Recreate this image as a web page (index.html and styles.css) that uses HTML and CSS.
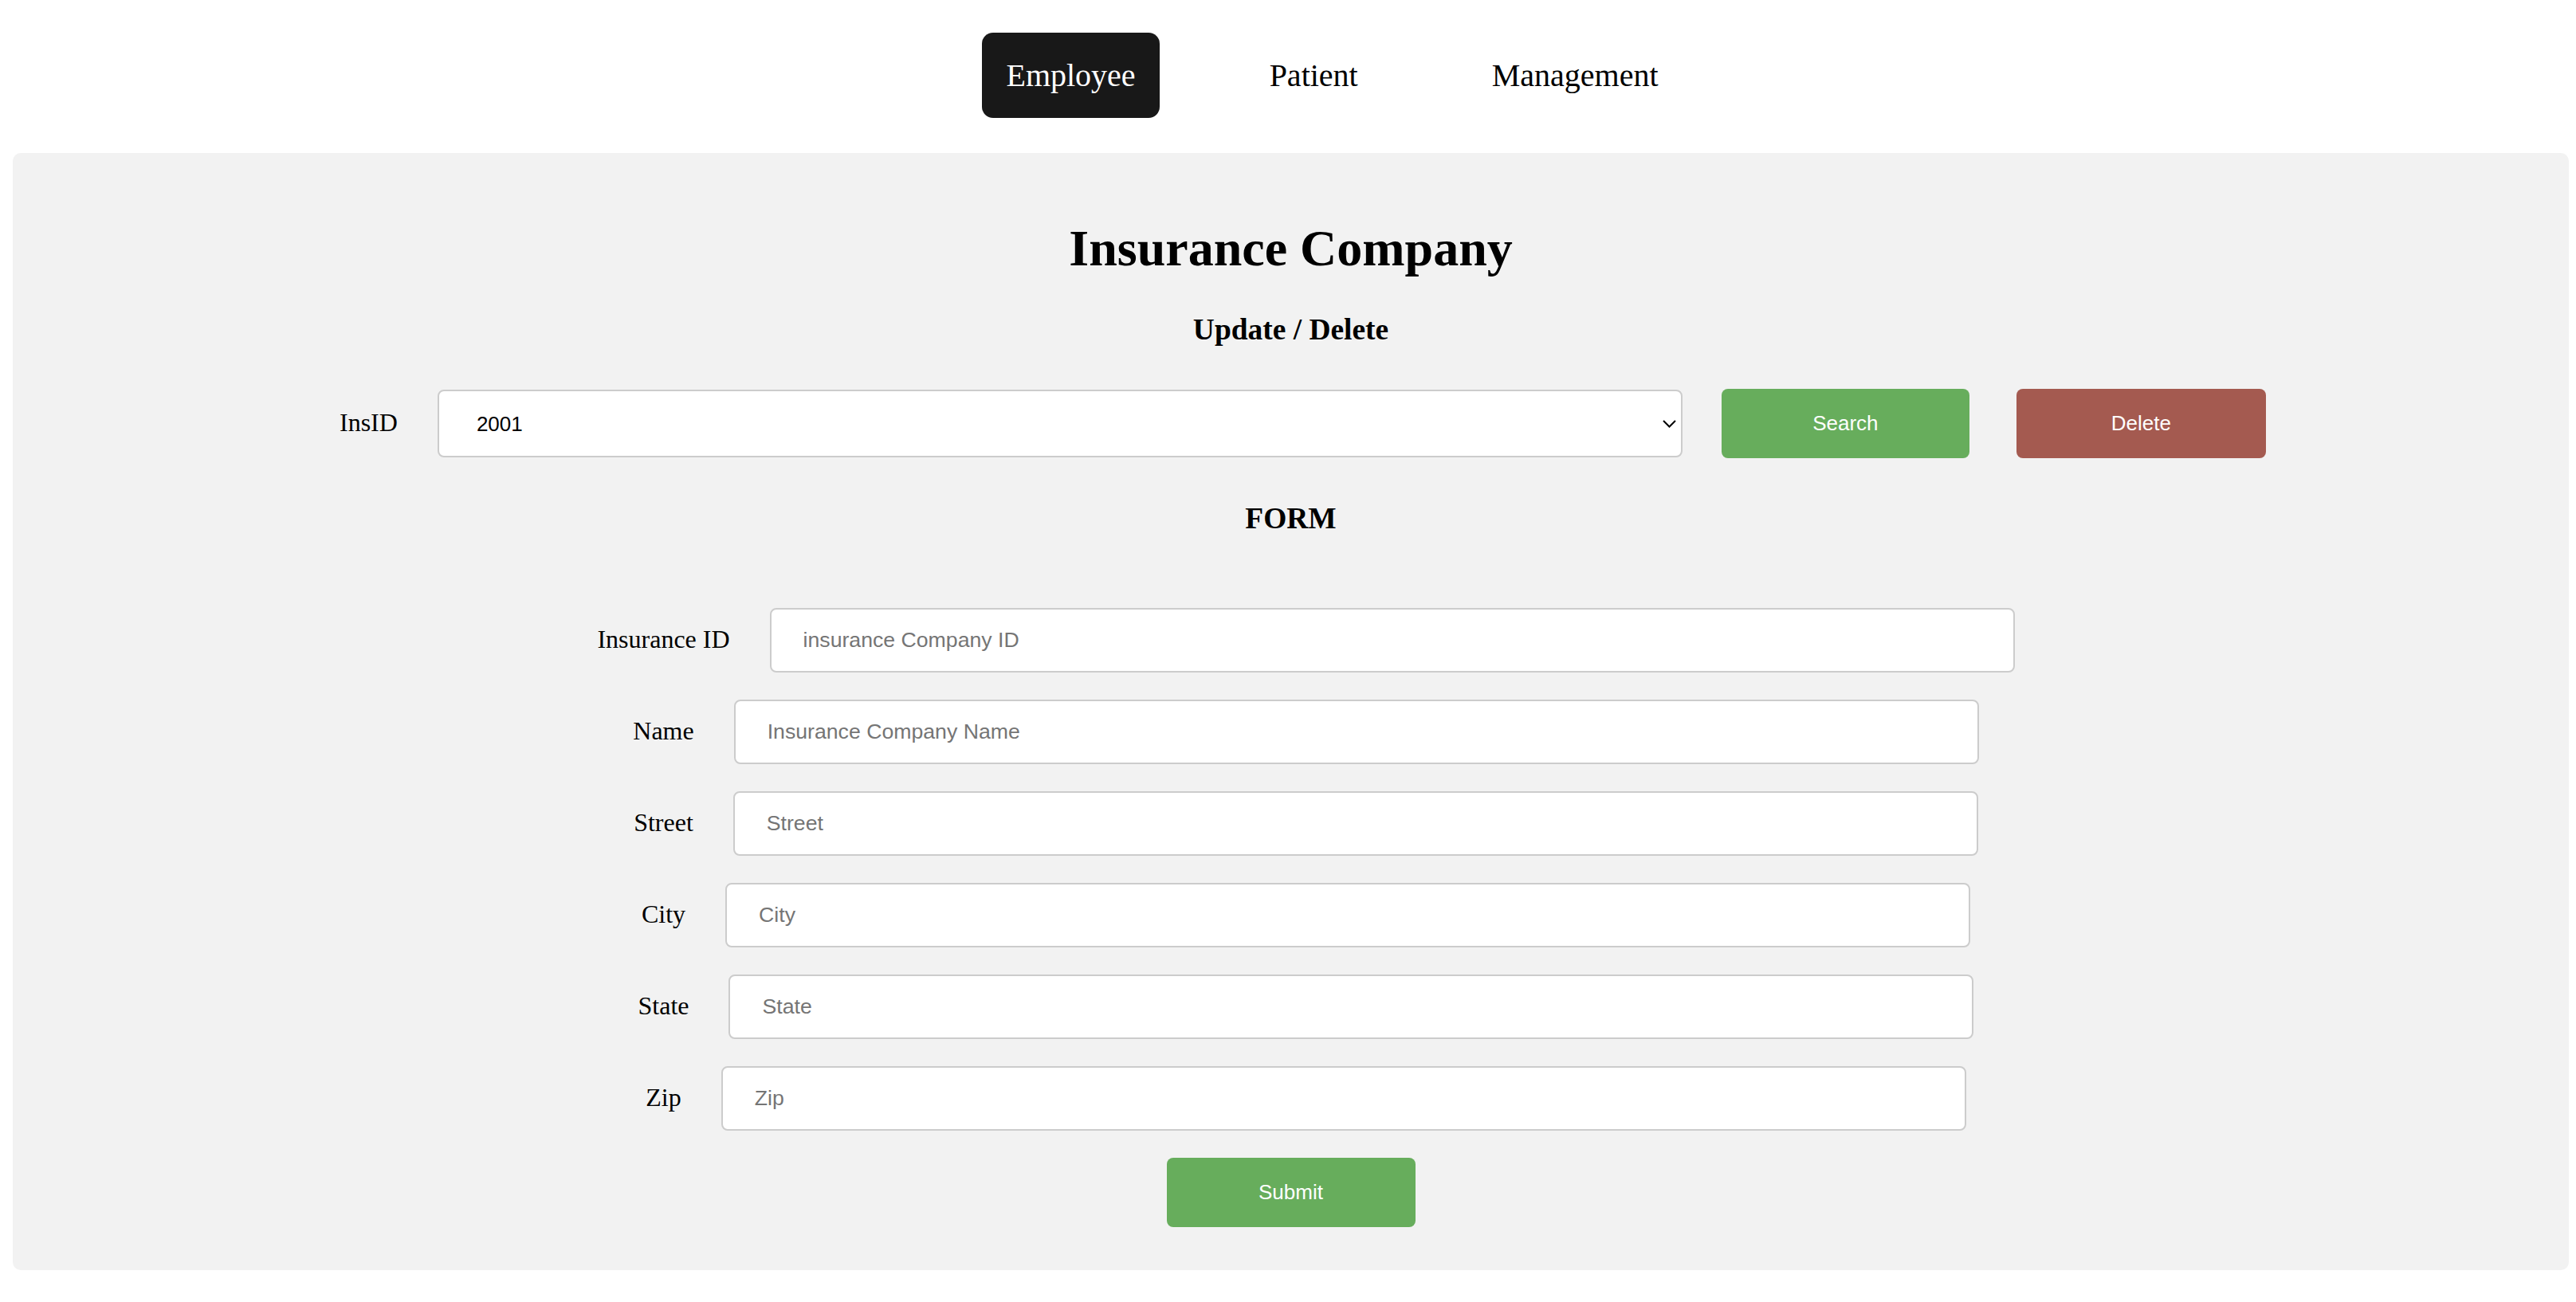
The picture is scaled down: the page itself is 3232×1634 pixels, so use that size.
FILE: index.html
```html
<!DOCTYPE html>
<html lang="en">
<head>
<meta charset="utf-8">
<title>Insurance Company</title>
<link rel="stylesheet" href="styles.css">
</head>
<body>
<nav class="topnav">
  <a class="nav-link active" href="#">Employee</a>
  <a class="nav-link" href="#">Patient</a>
  <a class="nav-link" href="#">Management</a>
</nav>
<main class="panel">
  <h1 class="title">Insurance Company</h1>
  <h3 class="subtitle">Update / Delete</h3>
  <div class="search-row">
    <label class="lbl">InsID</label>
    <div class="select-wrap">
      <select class="select"><option>2001</option></select>
      <svg class="chev" width="17" height="10" viewBox="0 0 17 10"><path d="M1 1 L8.5 8.5 L16 1" fill="none" stroke="#000" stroke-width="2"/></svg>
    </div>
    <button class="btn btn-green btn-search" type="button">Search</button>
    <button class="btn btn-red btn-delete" type="button">Delete</button>
  </div>
  <h3 class="subtitle">FORM</h3>
  <form class="form">
    <div class="form-row"><label class="lbl">Insurance ID</label><input class="field" placeholder="insurance Company ID"></div>
    <div class="form-row"><label class="lbl">Name</label><input class="field" placeholder="Insurance Company Name"></div>
    <div class="form-row"><label class="lbl">Street</label><input class="field" placeholder="Street"></div>
    <div class="form-row"><label class="lbl">City</label><input class="field" placeholder="City"></div>
    <div class="form-row"><label class="lbl">State</label><input class="field" placeholder="State"></div>
    <div class="form-row"><label class="lbl">Zip</label><input class="field" placeholder="Zip"></div>
    <div class="submit-row"><button class="btn btn-green btn-submit" type="button">Submit</button></div>
  </form>
</main>
</body>
</html>
```
FILE: styles.css
```css
html, body {
  background: #ffffff;
}
body {
  margin: 16px 9px 16px 16px;
  font-family: "Liberation Serif", "Times New Roman", serif;
  color: #000;
}
.topnav {
  display: flex;
  justify-content: center;
  gap: 108px;
  padding: 25px 0 0 104px;
  margin-bottom: 44px;
}
.nav-link {
  display: block;
  font-size: 40px;
  line-height: 47px;
  padding: 30px 30px;
  color: #000;
  text-decoration: none;
  border-radius: 14px;
}
.nav-link.active {
  background: #181818;
  color: #fff;
}
.panel {
  display: block;
  background: #f2f2f2;
  border-radius: 10px;
  padding: 40px;
}
.title {
  font-size: 64px;
  line-height: 74px;
  font-weight: bold;
  text-align: center;
  margin: 42.88px 0;
}
.subtitle {
  font-size: 37.44px;
  line-height: 43px;
  font-weight: bold;
  text-align: center;
  margin: 37.44px 0;
}
.search-row {
  display: flex;
  align-items: center;
  padding: 16px 0 16px 370px;
}
.lbl {
  font-size: 32px;
  line-height: 37px;
  white-space: nowrap;
  margin-right: 50px;
  padding-bottom: 3px;
}
.select-wrap {
  position: relative;
  width: 1562px;
  height: 85px;
  margin-right: 49px;
}
.select {
  appearance: none;
  -webkit-appearance: none;
  width: 100%;
  height: 100%;
  box-sizing: border-box;
  border: 2px solid #cccccc;
  border-radius: 8px;
  background: #fff;
  padding: 0 0 0 47px;
  font-family: "Liberation Sans", Arial, sans-serif;
  font-size: 26px;
  color: #000;
  outline: none;
}
.chev {
  position: absolute;
  right: 8px;
  top: 38px;
  pointer-events: none;
}
.btn {
  border: none;
  border-radius: 8px;
  height: 87px;
  color: #fff;
  font-family: "Liberation Sans", Arial, sans-serif;
  font-size: 26px;
  padding: 0;
  cursor: pointer;
}
.btn-green {
  background: #67ad5c;
}
.btn-red {
  background: #a45a50;
}
.btn-search {
  width: 311px;
  margin-right: 59px;
}
.btn-delete {
  width: 313px;
}
.form {
  padding-top: 54px;
  margin: 0;
}
.form-row {
  display: flex;
  justify-content: center;
  align-items: center;
  padding-left: 38px;
  margin-bottom: 34px;
}
.field {
  width: 1562px;
  height: 81px;
  box-sizing: border-box;
  border: 2px solid #cccccc;
  border-radius: 8px;
  background: #fff;
  padding: 0 40px;
  font-family: "Liberation Sans", Arial, sans-serif;
  font-size: 26.67px;
  color: #000;
  outline: none;
}
.field::placeholder {
  color: #757575;
}
.submit-row {
  display: flex;
  justify-content: center;
}
.btn-submit {
  width: 312px;
  margin-bottom: 14px;
}
```
